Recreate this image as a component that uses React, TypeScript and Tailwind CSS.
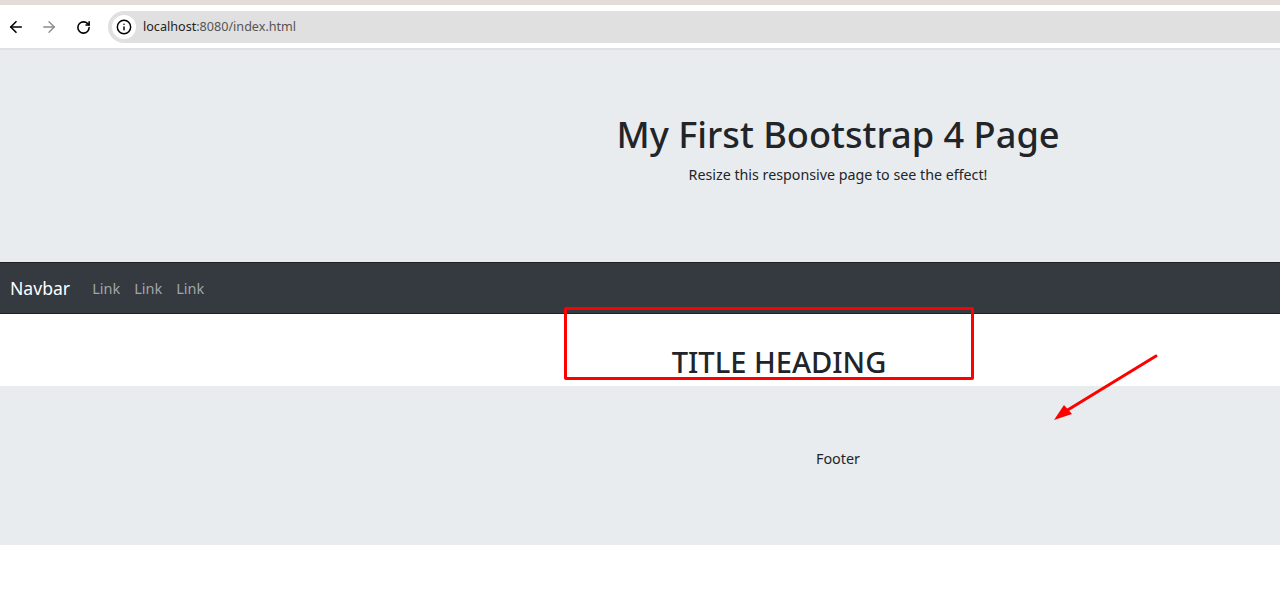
import { ArrowLeft, ArrowRight, Info, RotateCw } from "lucide-react";

const font = { heading: "font-['Noto_Sans','Open_Sans',sans-serif]" };

function BrowserBar() {
    return (
        <div className="h-[50px] flex flex-col bg-white border-b-2 border-[#e0e0e0]">
            <div className="h-[5px] bg-[#e3dcd8]" />
            <div className="flex-1 flex items-center pt-px">
                <ArrowLeft className="ml-[7px] w-[18px] h-[18px] text-black" strokeWidth={2.2} />
                <ArrowRight className="ml-[15px] w-[18px] h-[18px] text-[#8a8a8a]" strokeWidth={1.7} />
                <RotateCw className="ml-[18px] w-[15px] h-[15px] text-black" strokeWidth={2.5} />
                <div className="ml-[17px] flex-1 h-8 flex items-center rounded-l-full bg-[#e0e0e0] pl-[4px]">
                    <div className="w-[24px] h-[24px] rounded-full bg-white flex items-center justify-center">
                        <Info className="w-[16px] h-[16px] text-black" strokeWidth={2.2} />
                    </div>
                    <span className="ml-[7px] text-[12.6px] text-[#222]">
                        localhost<span className="text-[#555]">:8080/index.html</span>
                    </span>
                </div>
            </div>
        </div>
    );
}

export default function App() {
    return (
        <main className={`relative h-[612px] overflow-hidden bg-white text-[#212529] ${font.heading}`}>
            <BrowserBar />

            <section className="h-[212px] bg-[#e9ecef] pl-[396px] pt-[58px] text-center">
                <h1 className="text-[36.2px] leading-[52px] font-medium">My First Bootstrap 4 Page</h1>
                <p className="mt-[4px] text-[14.26px] leading-[22px]">Resize this responsive page to see the effect!</p>
            </section>

            <nav className="h-[52px] bg-[#343a40] border-y border-[#1d2124] flex items-center pl-[10px]">
                <a className="text-[17.6px] text-white">Navbar</a>
                <div className="ml-[22px] flex gap-[14px] text-[14.5px] text-[#a3a6a9] pt-px">
                    <a>Link</a>
                    <a>Link</a>
                    <a>Link</a>
                </div>
            </nav>

            <section className="h-[72px] pl-[278px] pt-[28px] text-center">
                <h2 className="text-[29.1px] leading-[40px] font-medium">TITLE HEADING</h2>
            </section>

            <footer className="h-[159px] bg-[#e9ecef] pl-[396px] pt-[62px] text-center">
                <p className="text-[14.4px] leading-[22px]">Footer</p>
            </footer>

            {/* annotations drawn over the screenshot */}
            <div className="absolute left-[564px] top-[307px] w-[410px] h-[73px] border-[3px] border-[#ff0000] rounded-[2px]" />
            <svg className="absolute left-[1040px] top-[345px]" width="130" height="85" viewBox="0 0 130 85">
                <path d="M116 11 L26 66" stroke="#ff0000" strokeWidth="3" strokeLinecap="round" fill="none" />
                <path d="M14 75 L24 60 L32 69 Z" fill="#ff0000" />
            </svg>
        </main>
    );
}
